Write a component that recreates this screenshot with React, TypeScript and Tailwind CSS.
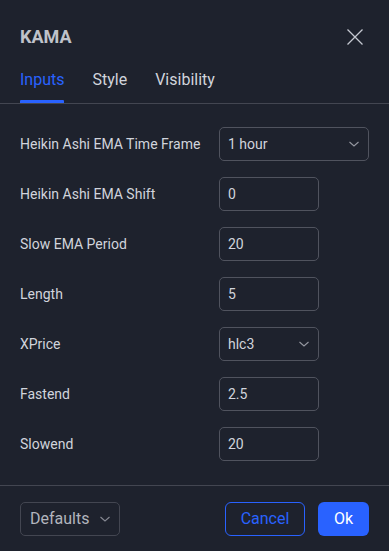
import React from "react";

const Chevron = ({ className = "" }: { className?: string }) => (
  <svg width="12" height="8" viewBox="0 0 12 8" className={className} fill="none">
    <path d="M1.5 2 L6 6 L10.5 2" stroke="currentColor" strokeWidth="1.1" />
  </svg>
);

const rows: { label: string; value: string; kind: "select" | "input"; wide?: boolean }[] = [
  { label: "Heikin Ashi EMA Time Frame", value: "1 hour", kind: "select", wide: true },
  { label: "Heikin Ashi EMA Shift", value: "0", kind: "input" },
  { label: "Slow EMA Period", value: "20", kind: "input" },
  { label: "Length", value: "5", kind: "input" },
  { label: "XPrice", value: "hlc3", kind: "select" },
  { label: "Fastend", value: "2.5", kind: "input" },
  { label: "Slowend", value: "20", kind: "input" },
];

export default function App() {
  return (
    <div
      className="w-[389px] h-[551px] bg-[#1e222d] flex flex-col text-[#d1d4dc]"
      style={{ fontFamily: "Roboto, 'Noto Sans', sans-serif" }}
    >
      <div className="h-[56px] pt-[17px] px-5 flex items-center justify-between shrink-0">
        <div className="text-[18px] font-bold text-[#bfc2ca]">KAMA</div>
        <svg width="18" height="18" viewBox="0 0 18 18" className="mr-[5px] text-[#c5c8d0]">
          <path d="M1.5 1.5 L16.5 16.5 M16.5 1.5 L1.5 16.5" stroke="currentColor" strokeWidth="1.3" />
        </svg>
      </div>
      <div className="h-[48px] px-5 flex gap-7 border-b border-[#434651] shrink-0">
        <div className="relative flex items-center pt-[1px] text-[16px] text-[#2962ff]">
          Inputs
          <div className="absolute left-0 right-0 bottom-0 h-[3px] bg-[#2962ff] rounded-t-[1px]" />
        </div>
        <div className="flex items-center pt-[1px] text-[16px] text-[#d1d4dc]">Style</div>
        <div className="flex items-center pt-[1px] text-[16px] text-[#d1d4dc]">Visibility</div>
      </div>
      <div className="flex-1 px-5 pt-[23px] flex flex-col gap-4">
        {rows.map((r) => (
          <div key={r.label} className="grid grid-cols-[199px_auto] items-center h-[34px]">
            <div className="text-[14px] text-[#d1d4dc]">{r.label}</div>
            <div
              className={`h-[34px] ${r.wide ? "w-[150px]" : "w-[100px]"} border border-[#50535e] rounded-[5px] flex items-center justify-between pl-[8px] pr-[8px] text-[14px] text-[#d1d4dc]`}
            >
              <span>{r.value}</span>
              {r.kind === "select" && <Chevron className="text-[#9598a1]" />}
            </div>
          </div>
        ))}
      </div>
      <div className="h-[66px] shrink-0 border-t border-[#434651] px-5 flex items-center justify-between">
        <div className="h-[34px] w-[100px] border border-[#434651] rounded-[5px] flex items-center justify-between pl-[9px] pr-[8px] text-[16px] text-[#b2b5be]">
          <span>Defaults</span>
          <Chevron className="text-[#868993]" />
        </div>
        <div className="flex gap-[13px]">
          <div className="h-[34px] w-[80px] border border-[#2962ff] rounded-[6px] flex items-center justify-center text-[16px] text-[#2962ff]">
            Cancel
          </div>
          <div className="h-[34px] w-[51px] bg-[#2962ff] rounded-[6px] flex items-center justify-center text-[16px] text-white">
            Ok
          </div>
        </div>
      </div>
    </div>
  );
}
